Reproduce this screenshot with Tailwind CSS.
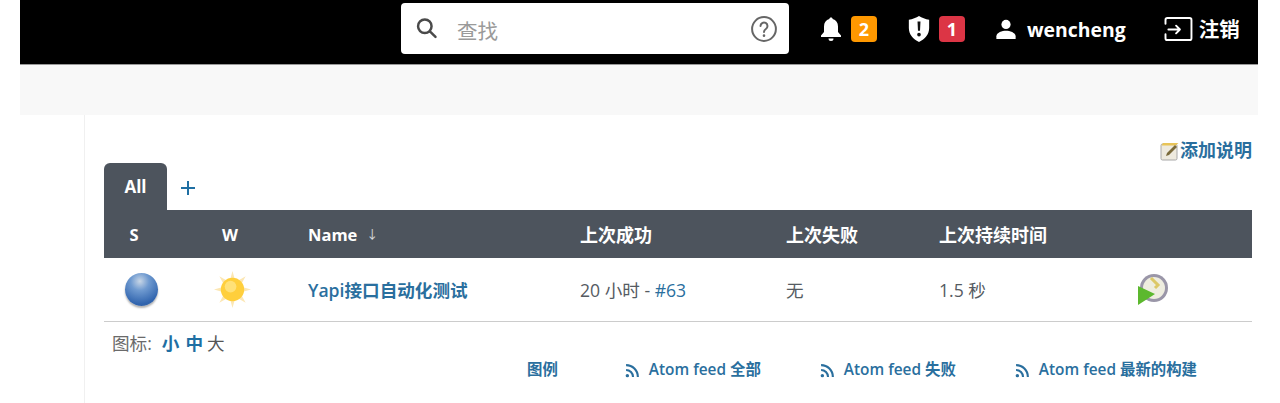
<!DOCTYPE html>
<html lang="zh-CN">
<head>
    <meta charset="UTF-8">
    <meta name="viewport" content="width=device-width, initial-scale=1.0">
    <title>Dashboard</title>
    <script src="https://cdn.jsdelivr.net/npm/@tailwindcss/browser@4"></script>
</head>
<body class="bg-white h-[403px] overflow-hidden font-['Open_Sans','Noto_Sans_CJK_SC',sans-serif] text-[#555b62]">
    <div class="ml-[20px] w-[1238px]">
        <!-- Header -->
        <header class="h-[65px] bg-black flex items-center text-white border-b border-[#999]">
            <div class="ml-[381px] w-[388px] h-[51px] mt-[-7px] bg-white rounded-[4px] flex items-center text-[#555]">
                <svg class="ml-[12px] w-[27px] h-[27px]" viewBox="0 0 24 24" fill="none" stroke="#4a4a4a" stroke-width="2.2" stroke-linecap="round"><circle cx="10.5" cy="10" r="6"/><path d="M15 14.5l5 5"/></svg>
                <span class="ml-[17px] mt-[5px] text-[20.500px] text-[#9a9a9a]">查找</span>
                <svg class="ml-auto mr-[11px] w-[28px] h-[28px]" viewBox="0 0 24 24" fill="none" stroke="#666" stroke-width="1.7" stroke-linecap="round"><circle cx="12" cy="12" r="10.2"/><path d="M9 9.5a3 3 0 1 1 4.6 2.5c-1 .7-1.6 1.2-1.6 2.5"/><path d="M12 17.6v.2" stroke-width="2.2"/></svg>
            </div>
            <svg class="ml-[30px] w-[24px] h-[26px] mt-[-6px]" viewBox="0 0 24 26" fill="#fff"><path d="M12 1.5c1 0 1.6.7 1.7 1.6 3.400.9 5.300 3.700 5.300 7.400v5.500l3 3.500v1.500H2v-1.500l3-3.500v-5.500c0-3.700 1.900-6.500 5.300-7.400.1-.9.700-1.600 1.700-1.600z"/><path d="M9.500 22.500h5a2.500 2.500 0 0 1-5 0z"/></svg>
            <span class="ml-[8px] mt-[-6px] w-[26px] h-[26px] rounded-[4px] bg-[#ff9800] flex items-center justify-center text-[18px] font-bold">2</span>
            <svg class="ml-[30px] mt-[-6px] w-[24px] h-[28px]" viewBox="0 0 26 30"><path fill="#fff" d="M13 1c3 2 7 3.500 11 4v9c0 7-4.500 12-11 15C6.500 26 2 21 2 14V5c4-.5 8-2 11-4z"/><path fill="#111" d="M11.400 7h3.200l-.5 10h-2.200zM13 19a2 2 0 1 1 0 4 2 2 0 0 1 0-4z"/></svg>
            <span class="ml-[8px] mt-[-6px] w-[26px] h-[26px] rounded-[4px] bg-[#dc3545] flex items-center justify-center text-[18px] font-bold">1</span>
            <svg class="ml-[30px] mt-[-7px] w-[22px] h-[22px]" viewBox="0 0 24 24" fill="#fff"><circle cx="12" cy="7" r="5"/><path d="M1.500 23v-3c0-4 6.500-6 10.500-6s10.500 2 10.500 6v3z"/></svg>
            <span class="ml-[10px] mt-[-5px] text-[19.400px] font-bold leading-none">wencheng</span>
            <svg class="ml-[37px] mt-[-6px] w-[30px] h-[25px]" viewBox="0 0 30 26" fill="none" stroke="#fff" stroke-width="2" stroke-linecap="round" stroke-linejoin="round"><path d="M2 7V3a2 2 0 0 1 2-2h23a2 2 0 0 1 2 2v19a2 2 0 0 1-2 2H4a2 2 0 0 1-2-2v-4"/><path d="M5 13h12M13 9l4 4-4 4"/></svg>
            <span class="ml-[6px] mt-[-5px] text-[20.500px] font-bold leading-none">注销</span>
        </header>

        <!-- Breadcrumb bar -->
        <div class="h-[50px] bg-[#f8f8f8]"></div>

        <div class="flex">
            <div class="w-[65px] h-[288px] border-r border-[#f0f0f0]"></div>

            <main class="w-[1148px] ml-[19px]">
                <div class="h-[48px] flex justify-end items-start pt-[23px]">
                    <a class="flex items-center text-[18px] font-semibold leading-[24px] text-[#2a6f9e]">
                        <svg class="w-[20px] h-[20px] mt-[2px]" viewBox="0 0 20 20"><rect x="1" y="3" width="16" height="16" rx="1.500" fill="#eeeade" stroke="#a8a8a8"/><path d="M1.500 4.500h14l3-2.500H3z" fill="#e8c458"/><path d="M6 15l1-3 8-8 2 2-8 8z" fill="#7a6a3a"/></svg>
                        添加说明
                    </a>
                </div>

                <!-- Tabs -->
                <div class="h-[47px] flex items-stretch">
                    <div class="w-[63px] bg-[#4d545d] rounded-t-[6px] text-white font-bold text-[17px] flex items-center justify-center pt-[1px]">All</div>
                    <svg class="ml-[12px] mt-[16px] w-[18px] h-[18px]" viewBox="0 0 18 18" stroke="#1f6fa3" stroke-width="2"><path d="M9 2v14M2 9h14"/></svg>
                </div>

                <!-- Job table -->
                <div class="grid grid-cols-[60px_132px_284px_206px_153px_199px_1fr] h-[48px] items-center pt-[2px] bg-[#4d545d] text-white font-bold text-[18px]">
                    <div class="text-center text-[16.500px]">S</div>
                    <div class="text-center text-[16.500px]">W</div>
                    <div class="pl-[12px] flex items-center text-[16.500px]">Name<span class="ml-[9px] text-[12px] font-normal text-white/80">↓</span></div>
                    <div>上次成功</div>
                    <div>上次失败</div>
                    <div>上次持续时间</div>
                    <div></div>
                </div>
                <div class="grid grid-cols-[60px_132px_284px_206px_153px_199px_1fr] h-[64px] items-center border-b border-[#ccc] text-[17.600px]">
                    <div class="flex justify-center">
                        <div class="ml-[14px] w-[33px] h-[33px] rounded-full bg-[radial-gradient(circle_at_45%_25%,#c8d6e6_0%,#6f9ad0_30%,#2f63ad_75%,#54709a_100%)] shadow-[0_2px_2px_rgba(0,0,0,0.3)]"></div>
                    </div>
                    <div class="flex justify-center">
                        <svg class="ml-[4px] w-[37px] h-[37px]" viewBox="0 0 38 38"><g fill="#fce7b4"><path d="M19 0l2.500 9h-5zM19 38l2.500-9h-5zM0 19l9-2.500v5zM38 19l-9-2.500v5zM5.500 5.500l8 4.500-3.500 3.500zM32.500 5.500l-8 4.500 3.500 3.500zM5.500 32.500l8-4.500-3.500-3.500zM32.500 32.500l-8-4.500 3.500-3.500z"/></g><circle cx="19" cy="19" r="12" fill="#ffcf3c"/><circle cx="17" cy="16" r="6" fill="#ffe178"/></svg>
                    </div>
                    <a class="pl-[12px] pt-[1px] font-semibold text-[#2a6f9e]">Yapi接口自动化测试</a>
                    <div class="pt-[1px]">20 小时 - <a class="text-[#2a6f9e]">#63</a></div>
                    <div class="pt-[1px]">无</div>
                    <div class="pt-[1px]">1.5 秒</div>
                    <div>
                        <svg class="w-[32px] h-[32px] mt-[-1px]" viewBox="0 0 32 32"><circle cx="16" cy="15" r="14" fill="#9a96a8"/><circle cx="16" cy="15" r="11" fill="#eeeddf"/><path d="M13 5l7 7-3 3" fill="none" stroke="#dcc868" stroke-width="3"/><path d="M0 13l17 8-17 11z" fill="#5cb82e"/></svg>
                    </div>
                </div>

                <!-- Icon size -->
                <div class="h-[44px] pl-[8px] pt-[8px] flex items-start text-[17.600px] leading-[26px] text-[#6a6a6a]">
                    图标:
                    <a class="ml-[10px] font-bold text-[#1f6fa3]">小</a>
                    <a class="ml-[6px] font-bold text-[#1f6fa3]">中</a>
                    <span class="ml-[4px] text-[#555]">大</span>
                </div>

                <!-- Feeds -->
                <div class="flex items-center text-[15.400px] font-semibold text-[#2a6f9e] h-[20px] mt-[-6px]">
                    <a class="ml-[423px]">图例</a>
                    <a class="ml-[67px] flex items-center">
                        <svg class="w-[15px] h-[15px] mr-[9px]" viewBox="0 0 14 14" fill="none" stroke="#2a6f9e" stroke-width="2"><circle cx="2.200" cy="11.800" r="1.600" fill="#2a6f9e" stroke="none"/><path d="M1 6.500a6.500 6.500 0 0 1 6.500 6.500M1 2a11 11 0 0 1 11 11"/></svg>Atom feed 全部</a>
                    <a class="ml-[59px] flex items-center">
                        <svg class="w-[15px] h-[15px] mr-[9px]" viewBox="0 0 14 14" fill="none" stroke="#2a6f9e" stroke-width="2"><circle cx="2.200" cy="11.800" r="1.600" fill="#2a6f9e" stroke="none"/><path d="M1 6.500a6.500 6.500 0 0 1 6.500 6.500M1 2a11 11 0 0 1 11 11"/></svg>Atom feed 失败</a>
                    <a class="ml-[59px] flex items-center">
                        <svg class="w-[15px] h-[15px] mr-[9px]" viewBox="0 0 14 14" fill="none" stroke="#2a6f9e" stroke-width="2"><circle cx="2.200" cy="11.800" r="1.600" fill="#2a6f9e" stroke="none"/><path d="M1 6.500a6.500 6.500 0 0 1 6.500 6.500M1 2a11 11 0 0 1 11 11"/></svg>Atom feed 最新的构建</a>
                </div>
            </main>
        </div>
    </div>
</body>
</html>
